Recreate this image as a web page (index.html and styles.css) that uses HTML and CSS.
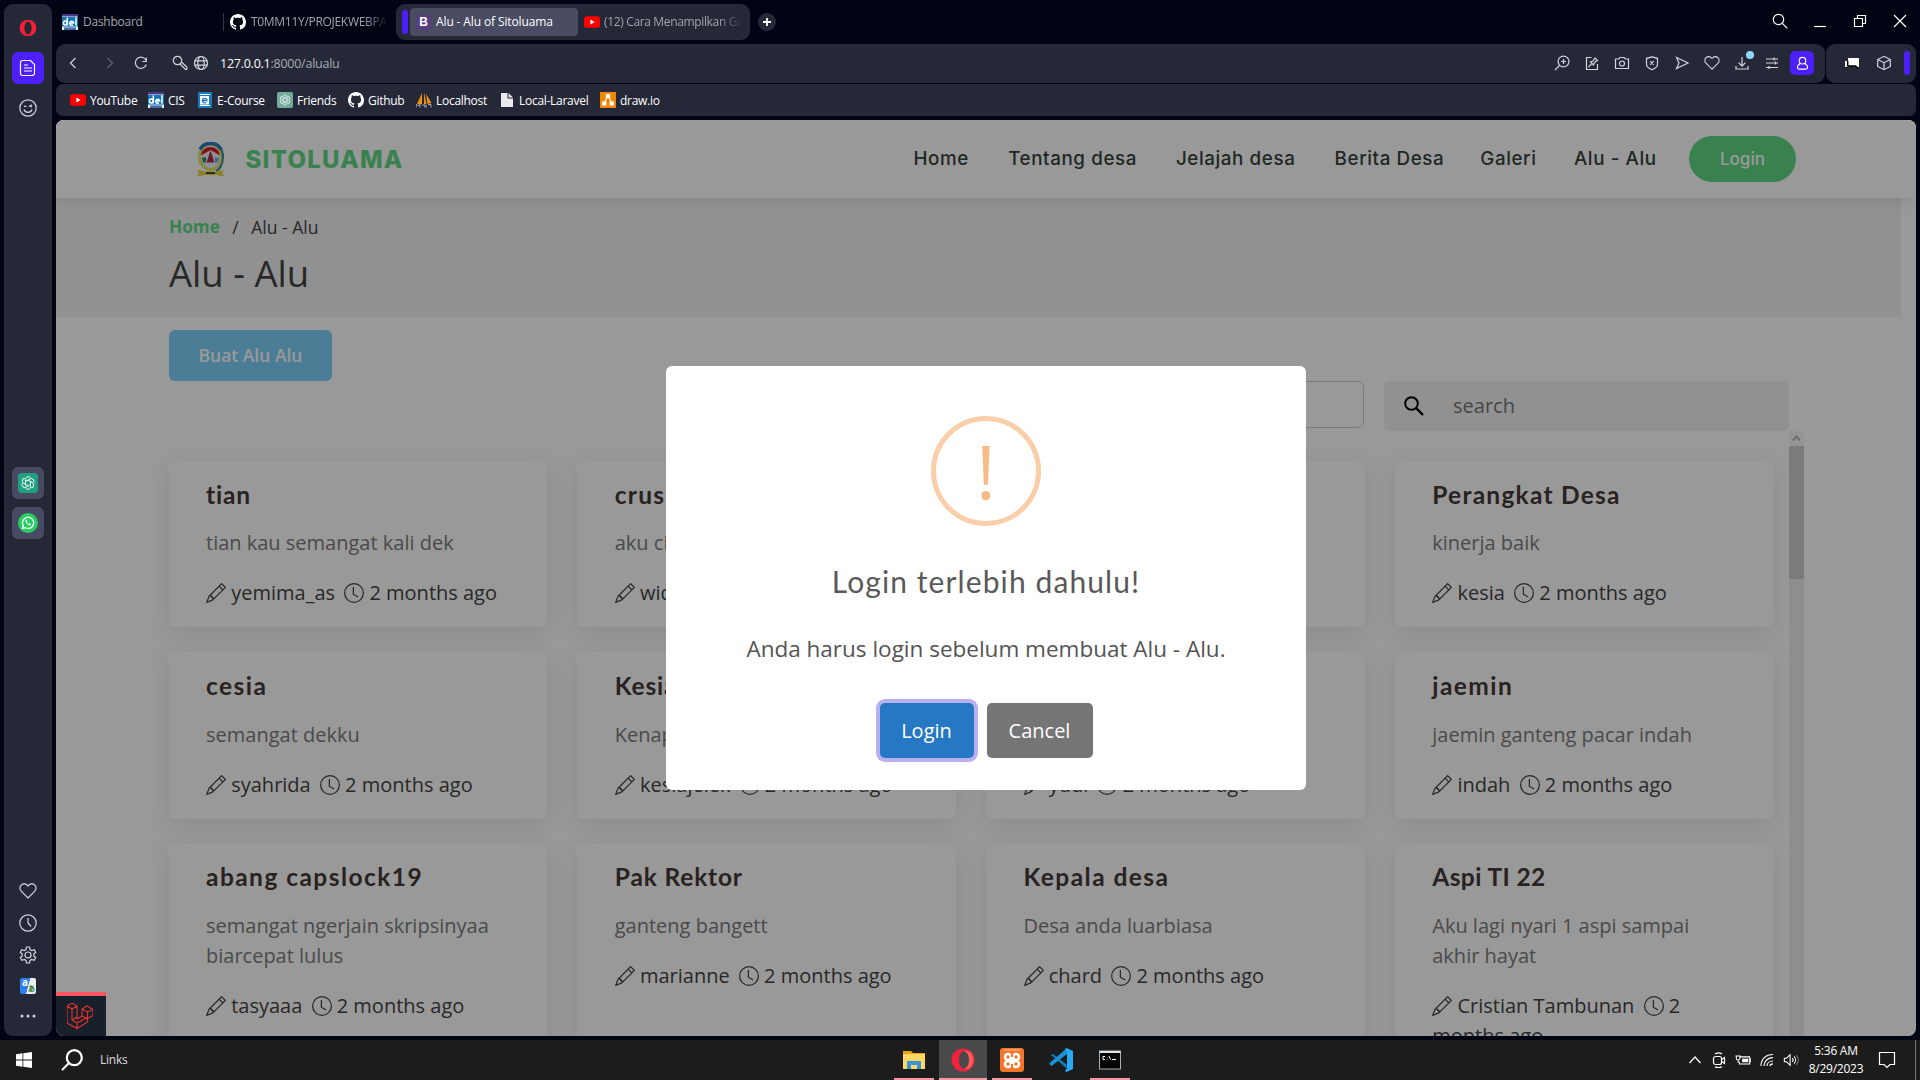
FILE: index.html
```html
<!DOCTYPE html>
<html lang="id">
<head>
<meta charset="utf-8">
<title>Alu - Alu of Sitoluama</title>
<link rel="stylesheet" href="styles.css">
</head>
<body>
<svg class="sprite" aria-hidden="true">
  <symbol id="pencil" viewBox="0 0 16 16"><path d="M12.146.146a.5.5 0 0 1 .708 0l3 3a.5.5 0 0 1 0 .708l-10 10a.5.5 0 0 1-.168.11l-5 2a.5.5 0 0 1-.65-.65l2-5a.5.5 0 0 1 .11-.168l10-10zM11.207 2.5 13.5 4.793 14.793 3.5 12.5 1.207 11.207 2.5zm1.586 3L10.5 3.207 4 9.707V10h.5a.5.5 0 0 1 .5.5v.5h.5a.5.5 0 0 1 .5.5v.5h.293l6.5-6.5zm-9.761 5.175-.106.106-1.528 3.821 3.821-1.528.106-.106A.5.5 0 0 1 5 12.5V12h-.5a.5.5 0 0 1-.5-.5V11h-.5a.5.5 0 0 1-.468-.325z"/></symbol>
  <symbol id="clock" viewBox="0 0 16 16"><path d="M8 3.5a.5.5 0 0 0-1 0V9a.5.5 0 0 0 .252.434l3.5 2a.5.5 0 0 0 .496-.868L8 8.71V3.5z"/><path d="M8 16A8 8 0 1 0 8 0a8 8 0 0 0 0 16zm7-8A7 7 0 1 1 1 8a7 7 0 0 1 14 0z"/></symbol>
  <symbol id="github" viewBox="0 0 16 16"><path d="M8 0C3.58 0 0 3.58 0 8c0 3.54 2.29 6.53 5.47 7.59.4.07.55-.17.55-.38 0-.19-.01-.82-.01-1.49-2.01.37-2.53-.49-2.69-.94-.09-.23-.48-.94-.82-1.13-.28-.15-.68-.52-.01-.53.63-.01 1.08.58 1.23.82.72 1.21 1.87.87 2.33.66.07-.52.28-.87.51-1.07-1.78-.2-3.64-.89-3.64-3.95 0-.87.31-1.59.82-2.15-.08-.2-.36-1.02.08-2.12 0 0 .67-.21 2.2.82.64-.18 1.32-.27 2-.27s1.36.09 2 .27c1.53-1.04 2.2-.82 2.2-.82.44 1.1.16 1.92.08 2.12.51.56.82 1.27.82 2.15 0 3.07-1.87 3.75-3.65 3.95.29.25.54.73.54 1.48 0 1.07-.01 1.93-.01 2.2 0 .21.15.46.55.38A8.01 8.01 0 0 0 16 8c0-4.42-3.58-8-8-8z"/></symbol>
  <symbol id="youtube" viewBox="0 0 16 16"><rect y="2.3" width="16" height="11.4" rx="2.6" fill="#f00"/><path d="M6.4 5.6v4.8L10.6 8z" fill="#fff"/></symbol>
  <symbol id="del" viewBox="0 0 16 16"><rect width="16" height="16" fill="#e8f2f8"/><rect width="16" height="2.5" fill="#4a3a86"/><rect y="3" width="16" height="9.6" fill="#1476b8"/><rect x="2" y="13.4" width="12" height="2.6" fill="#4a6aa8"/><g fill="none" stroke="#fff" stroke-width="1.5"><circle cx="3.3" cy="9" r="1.9"/><path d="M5.3 3.5v8M7.7 9h4a2 2 0 1 0-.8 1.9M14 3.2v8.6"/></g></symbol>
  <symbol id="gpt" viewBox="0 0 16 16"><g fill="none" stroke="#fff" stroke-width=".9"><g id="petal"><path d="M5.500 9.300V4.300a2.800 2.800 0 0 1 5-1.600"/></g><use href="#petal" transform="rotate(60 8 8)"/><use href="#petal" transform="rotate(120 8 8)"/><use href="#petal" transform="rotate(180 8 8)"/><use href="#petal" transform="rotate(240 8 8)"/><use href="#petal" transform="rotate(300 8 8)"/></g></symbol>
  <symbol id="heart" viewBox="0 0 18 16"><path d="M9 15 2.2 8.1a4.2 4.2 0 0 1 0-6 4.2 4.2 0 0 1 6 0L9 3l.8-.9a4.2 4.2 0 0 1 6 0 4.2 4.2 0 0 1 0 6z"/></symbol>
</svg>

<div class="browser">
  <aside class="rail">
    <svg class="rail-opera" viewBox="0 0 16 16"><path fill-rule="evenodd" fill="#fa1e37" d="M8 .6a7.400 7.400 0 1 0 0 14.800A7.400 7.400 0 0 0 8 .6zm0 1.800c1.900 0 3.200 2.400 3.200 5.600S9.900 13.600 8 13.600 4.800 11.200 4.800 8 6.100 2.400 8 2.400z"/></svg>
    <div class="rail-box rail-active"><svg viewBox="0 0 18 18" class="line"><path d="M3.5 1.5h8l4 4v8.500a2.500 2.500 0 0 1-2.500 2.500h-9.500a2 2 0 0 1-2-2v-11a2 2 0 0 1 2-2zM5 6h4M5 9h8M5 12h8"/></svg></div>
    <svg class="rail-icon line rail-smile" viewBox="0 0 18 18"><circle cx="9" cy="9" r="8.200"/><path d="M5 10.500c1.300 3.700 6.700 3.700 8 0M5 7.300h2.500M13 5.700l-2.300 1.400 2.300.9"/></svg>
    <div class="rail-box rail-app rail-first"><svg class="rail-logo rail-gpt" viewBox="-2 -2 20 20"><use href="#gpt" width="16" height="16"/></svg></div>
    <div class="rail-box rail-app"><svg class="rail-logo rail-wa" viewBox="0 0 20 20"><path d="m4.500 15.500.8-2.800a5.600 5.600 0 1 1 2.100 2z" fill="none" stroke="#fff" stroke-width="1.300"/><path d="M7.500 7c-.6 2.600 2.700 6 5.200 5.200l.2-1.200-1.500-.8-.8.7c-.8-.3-1.500-1-1.800-1.800l.6-.8-.7-1.500z" fill="#fff"/></svg></div>
    <div class="rail-bottom">
      <svg class="line" viewBox="0 0 18 16"><use href="#heart"/></svg>
      <svg class="line" viewBox="0 0 18 18"><circle cx="9" cy="9" r="8.200"/><path d="M9 4v5l3 3.500"/></svg>
      <svg class="line" viewBox="0 0 18 18"><path d="M7.500 1h3l.5 2.500 1.700 1 2.500-.8 1.500 2.600L14.800 8v2l1.900 1.700-1.500 2.600-2.500-.8-1.700 1-.5 2.500h-3L7 14.500l-1.700-1-2.500.8-1.500-2.600L3.200 10V8L1.300 6.300l1.500-2.600 2.500.8 1.700-1z"/><circle cx="9" cy="9" r="3"/></svg>
      <div class="translate"><b>a</b><i>あ</i></div>
      <svg viewBox="0 0 18 6" class="dots"><circle cx="3" cy="3" r="1.500"/><circle cx="9" cy="3" r="1.500"/><circle cx="15" cy="3" r="1.500"/></svg>
    </div>
  </aside>

  <div class="main">
    <div class="tabs">
      <div class="tab tab-dash"><svg class="fav"><use href="#del"/></svg><span>Dashboard</span></div>
      <div class="tab tab-git"><svg class="fav white"><use href="#github"/></svg><span class="fade">T0MM11Y/PROJEKWEBPA</span></div>
      <div class="tab-group">
        <div class="tab-bar"></div>
        <div class="tab tab-on"><span class="bs">B</span><span>Alu - Alu of Sitoluama</span></div>
        <div class="tab tab-yt"><svg class="fav"><use href="#youtube"/></svg><span class="fade">(12) Cara Menampilkan Ga</span></div>
      </div>
      <svg class="plus" viewBox="0 0 18 18"><circle cx="9" cy="9" r="9" fill="#252837"/><path d="M9 5v8M5 9h8" stroke="#fff" stroke-width="1.800"/></svg>
      <div class="window-tools">
        <svg class="line" viewBox="0 0 16 16"><circle cx="6.500" cy="6.500" r="5.200"/><path d="m10.300 10.300 5 5"/></svg>
        <svg class="line" viewBox="0 0 16 16"><path d="M2 13.500h12"/></svg>
        <svg class="line" viewBox="0 0 16 16"><path d="M2.500 5.500h8v8h-8zM5.500 5V2.500h8v8H11"/></svg>
        <svg class="line" viewBox="0 0 16 16"><path d="m2 2 12 12M14 2 2 14"/></svg>
      </div>
    </div>

    <div class="toolbar">
      <div class="address">
        <svg class="line back" viewBox="0 0 16 16"><path d="M10.500 3 5.500 8l5 5"/></svg>
        <svg class="line forward" viewBox="0 0 16 16"><path d="m5.500 3 5 5-5 5"/></svg>
        <svg class="line reload" viewBox="0 0 16 16"><path d="M13.300 9.500A5.600 5.600 0 1 1 13 5.300M13.300 2.500v4h-4"/></svg>
        <svg class="line key" viewBox="0 0 16 16"><circle cx="5.500" cy="5.500" r="4.200"/><path d="m8 9 5.500 5.500h1.300V12L9.400 7M4 4h.5"/></svg>
        <svg class="line globe" viewBox="0 0 16 16"><circle cx="8" cy="8" r="6.500"/><ellipse cx="8" cy="8" rx="3.200" ry="6.500"/><path d="M1.500 5.800h13M1.500 10.200h13"/></svg>
        <span class="url"><b>127.0.0.1</b>:8000/alualu</span>
        <div class="actions">
          <svg class="line" viewBox="0 0 16 16"><circle cx="9.500" cy="6.500" r="5.400"/><path d="M5.500 10.500 1 15M9.500 4v5M7 6.500h5"/></svg>
          <svg class="line" viewBox="0 0 16 16"><path d="M7.500 2.500h-5v12h11V9M4.500 12l3-3M6.500 7l3 3 1-2.500 3-2-2.500-2.500-2 3z"/></svg>
          <svg class="line" viewBox="0 0 16 16"><path d="M1.500 4h3L6 2.500h4L11.500 4h3v9.500h-13z"/><circle cx="8" cy="8.500" r="2.500"/></svg>
          <svg class="line" viewBox="0 0 16 16"><path d="m8 1.800 5.500 1.500v6c0 2.700-3 4.500-5.500 5.500-2.500-1-5.500-2.800-5.500-5.500v-6zM6.200 6.200l3.600 3.600M9.800 6.200 6.200 9.800"/></svg>
          <svg class="line" viewBox="0 0 16 16"><path d="m2.500 2.500 11.500 5.500-11.500 5.500L5 8z"/></svg>
          <svg class="line" viewBox="0 0 18 16"><use href="#heart"/></svg>
          <span class="download"><svg class="line" viewBox="0 0 16 16"><path d="M8 2v9M4.500 7.700 8 11.200l3.500-3.500M2 11v3h12v-3"/></svg></span>
          <svg class="line" viewBox="0 0 16 16"><path d="M2 4h12M2 8h12M2 12.500h12M10 2.500v3M11.500 6.500v3M5 11v3"/></svg>
          <span class="profile"><svg class="line" viewBox="0 0 16 16"><circle cx="8" cy="5" r="3.500"/><path d="M5.500 8C3.500 9.300 2.500 10.500 2.500 12c0 1.300.8 2 2 2h7c1.200 0 2-.7 2-2 0-1.500-1-2.700-3-4"/></svg></span>
        </div>
      </div>
      <div class="extras">
        <svg class="chair" viewBox="0 0 16 12"><path d="M4 1h11v8H4zM1 4h2.500v6H1zM12.500 5H15v5h-2.500z" fill="#fff"/><path d="M4.500 9h8M2 10.500h2M12 10.500h2M3.700 4v5" stroke="#000" stroke-width="1.500"/></svg>
        <svg class="line cube" viewBox="0 0 16 16"><path d="m8 1.300 6.300 3.200v7L8 14.700l-6.300-3.200v-7zM1.700 4.500 8 7.700l6.300-3.200M8 7.700v7"/></svg>
        <div class="extras-bar"></div>
      </div>
    </div>

    <div class="bookmarks">
      <a><svg class="fav"><use href="#youtube"/></svg>YouTube</a>
      <a><svg class="fav"><use href="#del"/></svg>CIS</a>
      <a><svg class="fav" viewBox="0 0 16 16"><rect x="1" width="14" height="16" fill="#1b7bbd"/><path d="M3 2.500h10M3 13.500h10" stroke="#fff"/><rect x="3" y="4" width="9" height="8.500" fill="#fff"/><path d="M5 8.500h5a2.300 2.300 0 1 0-1 2" fill="none" stroke="#1b7bbd" stroke-width="1.300"/></svg>E-Course</a>
      <a><svg class="fav gpt-fav" viewBox="-2 -2 20 20"><use href="#gpt" width="16" height="16"/></svg>Friends</a>
      <a><svg class="fav white"><use href="#github"/></svg>Github</a>
      <a><svg class="fav" viewBox="0 0 16 16"><path d="M6 1 1 12h5zM8 0v12h2.500zM10 2l5.500 9-4 1z" fill="#f29111"/><path d="M0 15.500V12l2 2 2-2v3.500M6 13h3v2.500M10 12.500v3M12 12.500h3v3" fill="none" stroke="#a9a9bd"/></svg>Localhost</a>
      <a><svg class="fav" viewBox="0 0 16 16"><path d="M2 1h6.500v5.500H14V15H2z" fill="#e8eaed"/><path d="m9.500 1 4.500 4.500H9.500z" fill="#e8eaed"/></svg>Local-Laravel</a>
      <a><svg class="fav" viewBox="0 0 16 16"><rect width="16" height="16" fill="#f08705"/><path d="m8 4-4 7M8 4l4 7" stroke="#fff" stroke-width="1.200"/><rect x="5.800" y="2" width="4.400" height="4" rx=".5" fill="#fff"/><rect x="2" y="9.500" width="4.400" height="4" rx=".5" fill="#fff"/><rect x="9.600" y="9.500" width="4.400" height="4" rx=".5" fill="#fff"/></svg>draw.io</a>
    </div>

    <div class="page">
      <header class="site-header">
        <svg class="crest" viewBox="0 0 27 34"><ellipse cx="13.500" cy="14.500" rx="12.500" ry="14" fill="#dfe368"/><path d="M13.500.5c8 0 12.500 6 12.500 14s-4 13-7 14" fill="none" stroke="#2a8aa0" stroke-width="2"/><path d="M3 7c4-8 17-8 21 0" fill="none" stroke="#2b7cc0" stroke-width="3.500"/><ellipse cx="13.500" cy="14.500" rx="9.500" ry="11" fill="#eef"/><path d="M4 13C5.500 1.500 21.500 1.500 23 13l-3.500-2-6-3.500-6 3.500z" fill="#e21a22"/><path d="m13.500 8 4 12h-8z" fill="#b03040"/><path d="M5 15h4v5H6z" fill="#2b8c50"/><path d="M18 15h4l-1 5h-3z" fill="#68b0c8"/><path d="M0 28h5l1 1h15l1-1h5l-2 2 2 3.500h-5l-1-1H6l-1 1H0L2 31z" fill="#e4d53c"/><path d="M9 30.500h9" stroke="#554a10" stroke-width="2"/></svg>
        <span class="brand">SITOLUAMA</span>
        <nav class="menu"><a>Home</a><a>Tentang desa</a><a>Jelajah desa</a><a>Berita Desa</a><a>Galeri</a><a>Alu - Alu</a></nav>
        <a class="header-login">Login</a>
      </header>

      <section class="crumbs">
        <div class="trail"><a>Home</a><span>/</span><span>Alu - Alu</span></div>
        <h1>Alu - Alu</h1>
      </section>

      <section class="controls">
        <button class="create">Buat Alu Alu</button>
        <div class="filters">
          <div class="picker"></div>
          <div class="search"><svg viewBox="0 0 20 20"><circle cx="7.500" cy="7.500" r="6.300" fill="none" stroke="#000" stroke-width="2"/><path d="m12 12 7 7" stroke="#000" stroke-width="2.400"/></svg><span>search</span></div>
        </div>
      </section>

      <section class="list">
        <div class="cards">
          <article class="card"><h2>tian</h2><p>tian kau semangat kali dek</p><div class="meta"><svg><use href="#pencil"/></svg> yemima_as <svg class="when"><use href="#clock"/></svg> 2 months ago</div></article>
          <article class="card"><h2 class="wide">crus</h2><p>aku ci</p><div class="meta"><svg><use href="#pencil"/></svg> wid</div></article>
          <article class="card"></article>
          <article class="card"><h2 class="wide">Perangkat Desa</h2><p>kinerja baik</p><div class="meta"><svg><use href="#pencil"/></svg> kesia <svg class="when"><use href="#clock"/></svg> 2 months ago</div></article>
          <article class="card"><h2 class="wider">cesia</h2><p>semangat dekku</p><div class="meta"><svg><use href="#pencil"/></svg> syahrida <svg class="when"><use href="#clock"/></svg> 2 months ago</div></article>
          <article class="card"><h2>Kesia</h2><p>Kenapa</p><div class="meta"><svg><use href="#pencil"/></svg> kesiajelek <svg class="when"><use href="#clock"/></svg> 2 months ago</div></article>
          <article class="card"><h2>&nbsp;</h2><p>&nbsp;</p><div class="meta"><svg><use href="#pencil"/></svg> yudi <svg class="when"><use href="#clock"/></svg> 2 months ago</div></article>
          <article class="card"><h2 class="wider">jaemin</h2><p>jaemin ganteng pacar indah</p><div class="meta"><svg><use href="#pencil"/></svg> indah <svg class="when"><use href="#clock"/></svg> 2 months ago</div></article>
          <article class="card"><h2 class="wider">abang capslock19</h2><p>semangat ngerjain skripsinyaa biarcepat lulus</p><div class="meta"><svg><use href="#pencil"/></svg> tasyaaa <svg class="when"><use href="#clock"/></svg> 2 months ago</div></article>
          <article class="card"><h2>Pak Rektor</h2><p>ganteng bangett</p><div class="meta"><svg><use href="#pencil"/></svg> marianne <svg class="when"><use href="#clock"/></svg> 2 months ago</div></article>
          <article class="card"><h2 class="wider">Kepala desa</h2><p>Desa anda luarbiasa</p><div class="meta"><svg><use href="#pencil"/></svg> chard <svg class="when"><use href="#clock"/></svg> 2 months ago</div></article>
          <article class="card"><h2 class="tight">Aspi TI 22</h2><p>Aku lagi nyari 1 aspi sampai akhir hayat</p><div class="meta"><svg><use href="#pencil"/></svg> Cristian Tambunan <svg class="when"><use href="#clock"/></svg> 2 months ago</div></article>
        </div>
        <div class="scrollbar"><svg viewBox="0 0 15 15"><path d="m4 9.500 3.500-4 3.500 4" fill="none" stroke="#b8b8b8" stroke-width="2.200"/></svg><div class="thumb"></div></div>
      </section>

      <div class="overlay">
        <div class="modal">
          <div class="warn"><span>!</span></div>
          <h3>Login terlebih dahulu!</h3>
          <p>Anda harus login sebelum membuat Alu - Alu.</p>
          <div class="buttons"><button class="ok">Login</button><button class="cancel">Cancel</button></div>
        </div>
      </div>

      <div class="debugbar"><svg viewBox="0 0 26 26"><path d="m0 3 5-3 5 3v13l5-3V6l5-3 6 3.500v6l-5.500 3V19L10 25.500 0 20zM0 3l5 3 5-3M5 6v11l5 3 11-6M15 6l5.500 3L26 6.500M20.500 9v6M10 20v5.500M5 17l5-3M15 13l5.500 3"/></svg></div>
    </div>
  </div>
</div>

<footer class="taskbar">
  <svg class="start" viewBox="0 0 16 16"><path d="M0 2.300 6.500 1.300V7.600H0zM7.300 1.200 16 0v7.600H7.300zM0 8.400h6.500v6.300L0 13.800zM7.300 8.400H16V16l-8.700-1.200z"/></svg>
  <svg class="find" viewBox="0 0 22 22"><circle cx="13.300" cy="8.700" r="7.500"/><path d="M8 14 1 21"/></svg>
  <span class="links">Links</span>
  <div class="apps">
    <div class="app open"><svg viewBox="0 0 24 24"><path d="M1 3h8l2 2h12v16H1z" fill="#e8a50c"/><path d="M1 6h22v15H1z" fill="#ffd864"/><path d="M5 21v-8h14v8h-4v-4H9v4z" fill="#3c92d8"/></svg></div>
    <div class="app open focused"><svg viewBox="0 0 24 24"><path fill-rule="evenodd" d="M12 .5a11.500 11.500 0 1 0 0 23 11.500 11.500 0 0 0 0-23zm1 2.800c2.800 0 5 3.800 5 8.700s-2.200 8.700-5 8.700-5-3.800-5-8.700 2.200-8.700 5-8.700z" fill="#f0233c"/><path d="M13 3.300c5-2 9.500 3 9.500 8.700s-4.500 10.700-9.500 8.700c2.800 0 5-3.800 5-8.700s-2.200-8.700-5-8.700z" fill="#ff5b5b"/></svg></div>
    <div class="app open"><svg viewBox="0 0 24 24"><rect width="24" height="24" rx="3" fill="#f3762b"/><path d="M4 2h16" stroke="#fff" stroke-opacity=".5"/><g fill="none" stroke="#fff" stroke-width="2.600"><circle cx="8" cy="9" r="3"/><circle cx="16" cy="9" r="3"/><circle cx="8" cy="16" r="3"/><circle cx="16" cy="16" r="3"/></g><path d="M9 11h6v3H9z" fill="#fff"/><path d="M11 5h2v4h-2zM11 16h2v4h-2z" fill="#f3762b"/></svg></div>
    <div class="app"><svg viewBox="0 0 24 24"><path d="m2.500 7.200 15 13.300v-4L4 5.900l-3.500 2z" fill="#0d7fc4"/><path d="m.5 16.100 2 1.900L18 6V0L.5 14.900z" fill="#1b8fd8"/><path d="M17.500 0 24 3v18l-6.500 3-1.500-1 2-3V4l-2-3z" fill="#2ba8f2"/></svg></div>
    <div class="app open"><svg viewBox="0 0 24 24"><rect x="1.500" y="3" width="21" height="18" fill="#050505" stroke="#a8b0b6"/><path d="M1.500 4h21" stroke="#dfe4e8" stroke-width="2"/><path d="M7 8.500H5v3h2M9 9v.5M9 11v.5M11 8l1.500 3.500M14 11.500h4" fill="none" stroke="#fff"/></svg></div>
  </div>
  <div class="tray">
    <svg class="line t-up" viewBox="0 0 16 16"><path d="m2.500 11 5.500-6 5.500 6"/></svg>
    <svg class="line" viewBox="0 0 16 16"><rect x="2.500" y="4.500" width="8" height="8" rx="2"/><path d="m10.500 7.500 3-2v6l-3-2M4 2c2-1.300 5-1.300 7 0M4 14.800c2 1 5 1 7 0"/></svg>
    <svg class="line" viewBox="0 0 18 16"><path d="M6 4.500h10.500v8H5V10M16.500 7H18v3h-1.500M1.500 3v3a2 2 0 0 0 4 0V3M0.500 3.500h6M3.500 8v3"/><path d="M8 6.500h7v4H8z" class="charge"/></svg>
    <svg class="line" viewBox="0 0 16 16"><path d="M2 14C2 7 7 2.500 14 2.500M5 14c0-5 4-8.300 9-8.300M8 14c0-3 2.500-5 6-5M11 14c0-1.300 1-2.200 3-2.200"/></svg>
    <svg class="line" viewBox="0 0 18 16"><path d="M1.500 6H4l4-4v12l-4-4H1.500zM10.500 6a3 3 0 0 1 0 4M12.500 4a6 6 0 0 1 0 8"/><path d="M15 2.500a8 8 0 0 1 0 11" opacity=".4"/></svg>
    <div class="time"><span>5:36 AM</span><span>8/29/2023</span></div>
    <svg class="line t-note" viewBox="0 0 18 18"><path d="M1.500 1.500h15v12h-4.500l-3 3-3-3H1.500z"/></svg>
  </div>
</footer>
</body>
</html>
```
FILE: styles.css
```css
* { box-sizing: border-box; }
body {
  margin: 0;
  width: 1920px;
  height: 1080px;
  overflow: hidden;
  background: #010413;
  font-family: "Open Sans", sans-serif;
  display: flex;
  flex-direction: column;
}
h1, h2, h3, p { margin: 0; font-weight: 400; }
svg { display: block; flex: none; }
button { border: 0; padding: 0; font: inherit; }
.sprite { position: absolute; width: 0; height: 0; }
.line { fill: none; stroke: #d4d6de; stroke-width: 1.2; }
.white { fill: #fff; }
.fav { width: 16px; height: 16px; }

.browser { height: 1040px; padding: 4px; display: flex; gap: 4px; flex: none; }

/* Side rail */
.rail {
  width: 48px;
  height: 1032px;
  border-radius: 9px;
  background: #252837;
  display: flex;
  flex-direction: column;
  align-items: center;
}
.rail-opera { width: 18px; height: 18px; margin: 15px 0; }
.rail-box { width: 32px; height: 32px; border-radius: 6px; display: flex; align-items: center; justify-content: center; }
.rail-active { background: #4d1ffc; }
.rail-active svg { width: 18px; height: 18px; stroke: #fff; }
.rail-smile { width: 18px; height: 18px; margin-top: 15px; }
.rail-app { background: #474a61; margin-top: 8px; }
.rail-first { margin-top: 350px; }
.rail-logo { width: 20px; height: 20px; }
.rail-gpt { background: #1fa07e; border-radius: 4px; }
.rail-wa { background: #27cf62; border-radius: 50%; }
.rail-bottom { margin-top: auto; padding-bottom: 11px; display: flex; flex-direction: column; align-items: center; gap: 14px; }
.rail-bottom svg { width: 18px; height: 18px; margin-right: 1px; }
.rail-bottom .dots { fill: #d4d6de; height: 18px; margin-top: -1px; }
.translate {
  width: 16px; height: 16px; border-radius: 2px;
  background: linear-gradient(105deg, #2f80ed 50%, #e9eef0 52%);
  display: flex; line-height: 1;
}
.translate b { font-size: 10px; line-height: 9px; color: #fff; padding-left: 2px; }
.translate i { font: 700 7px/9px "Noto Sans CJK JP", sans-serif; color: #277a2c; padding-top: 6px; }

/* Tab strip */
.main { width: 1860px; }
.tabs { height: 40px; display: flex; align-items: flex-start; font-size: 12px; color: #a3a5ab; }
.tab { display: flex; align-items: center; gap: 5px; height: 36px; white-space: nowrap; letter-spacing: -.25px; }
.tab span { position: relative; top: -1px; }
.tab-dash { width: 168px; padding-left: 6px; height: 36px; }
.tab-git { width: 172px; padding-left: 6px; letter-spacing: -.3px; position: relative; }
.tab-git::before { content: ""; width: 1px; height: 18px; background: #33364a; position: absolute; left: -1px; }
.fade { width: 138px; overflow: hidden; -webkit-mask-image: linear-gradient(90deg, #000 82%, transparent); mask-image: linear-gradient(90deg, #000 82%, transparent); }
.tab-group { width: 354px; height: 36px; border-radius: 9px; background: #252837; display: flex; align-items: center; padding-left: 6px; }
.tab-bar { width: 6px; height: 24px; border-radius: 3px; background: #4d1ffc; margin-right: 2px; }
.tab-on { width: 168px; height: 28px; padding-left: 6px; border-radius: 4px; background: #494c63; color: #fff; letter-spacing: -.12px; }
.tab .bs { top: 0; width: 15px; height: 15px; border-radius: 3px; background: #563d7c; color: #fff; font: 700 12px/15px "Liberation Sans", sans-serif; text-align: center; }
.tab-yt { padding-left: 6px; gap: 4px; letter-spacing: -.35px; }
.plus { width: 18px; height: 18px; margin: 9px 0 0 8px; }
.window-tools { display: flex; gap: 24px; margin: 9px 8px 0 auto; }
.window-tools svg { width: 16px; height: 16px; stroke: #fff; }

/* Address bar */
.toolbar { height: 39px; display: flex; gap: 1px; }
.address { width: 1769px; border-radius: 9px; background: #252837; display: flex; align-items: center; padding: 0 0 1px 9px; }
.address > svg { width: 16px; height: 16px; }
.forward { margin-left: 21px; opacity: .35; }
.reload { margin-left: 15px; }
.key { margin-left: 23px; }
.globe { margin-left: 5px; }
.url { font-size: 12.5px; color: #a9acb8; margin-left: 11px; letter-spacing: -.25px; }
.url b { font-weight: 400; color: #fff; }
.actions { margin: 0 11px 0 auto; display: flex; align-items: center; gap: 14px; }
.actions svg { width: 16px; height: 16px; }
.download { position: relative; }
.download::after { content: ""; position: absolute; right: -4px; top: -4px; width: 8px; height: 8px; border-radius: 50%; background: #8fd7ff; }
.profile { width: 24px; height: 24px; margin-left: -4px; border-radius: 5px; background: #4d1ffc; display: flex; align-items: center; justify-content: center; }
.actions .profile svg { stroke: #fff; width: 15px; height: 15px; }
.extras { width: 90px; border-radius: 9px; background: #252837; display: flex; align-items: center; padding: 0 0 1px 18px; }
.chair { width: 16px; height: 12px; }
.cube { width: 16px; height: 16px; margin-left: 16px; }
.extras-bar { width: 6px; height: 24px; border-radius: 3px; background: #4d1ffc; margin-left: 12px; }

.bookmarks {
  height: 32px; margin-top: 1px; border-radius: 7px; background: #252837; padding-left: 14px;
  display: grid; grid-template-columns: 78px 49px 80px 71px 68px 83px 101px 80px; align-items: center;
  font-size: 12px; color: #fff; letter-spacing: -.28px;
}
.bookmarks a { display: flex; gap: 4px; align-items: center; white-space: nowrap; }
.gpt-fav { background: #74aa9c; border-radius: 2px; }

/* Web page */
.page {
  position: relative;
  width: 1860px; height: 916px; margin-top: 4px;
  border-radius: 8px; overflow: hidden; background: #fff;
}
.site-header {
  position: relative; z-index: 1;
  height: 78px; padding-left: 141px; background: #fff; box-shadow: 0 2px 15px rgba(0, 0, 0, .1);
  display: flex; align-items: center; color: #444;
}
.crest { width: 27px; height: 35px; }
.brand { width: 668px; margin-left: 21.5px; font: 800 24px Inter, sans-serif; letter-spacing: 1.25px; color: #60d985; }
.menu {
  display: grid; grid-template-columns: 56px 129px 120px 107px 55px 80px; gap: 38.7px; padding-bottom: 1px;
  font: 500 18.8px Inter, sans-serif; letter-spacing: .6px; color: #37423b; white-space: nowrap;
}
.header-login {
  width: 107px; height: 46px; margin-left: 35px; border-radius: 23px; background: #60d985; color: #fff;
  font: 500 17px/46px Inter, sans-serif; text-align: center; 
}
.crumbs { width: 1845px; height: 119px; background: #f2f2f2; padding: 16px 0 0 113px; color: #444; }
.trail { height: 26px; display: flex; gap: 12.5px; font-size: 17.5px; line-height: 26px; }
.trail a { font-weight: 700; font-size: 17.2px; color: #60d985; }
.crumbs h1 { font-size: 36.5px; line-height: 42px; margin-top: 12px; }
.controls { height: 114px; padding: 13px 0 0 113px; }
.create { display: block; width: 163px; height: 51px; padding-bottom: 2px; border-radius: 6px; background: #7dd0fb; color: #fff; font-weight: 600; font-size: 17.5px; }
.filters { width: 1620px; display: flex; justify-content: flex-end; gap: 20px; }
.picker { width: 380px; height: 47px; border: 1px solid #ccc; border-radius: 6px; }
.search { width: 405px; height: 50px; border-radius: 5px; background: #f2f2f2; display: flex; align-items: center; padding-left: 20px; gap: 29px; font-size: 20px; color: #757575; }
.search svg { width: 20px; height: 20px; }
.search span { padding-bottom: 2px; }

.list { height: 605px; padding-left: 97.5px; display: flex; overflow: hidden; }
.cards { width: 1635.5px; padding: 30px 15px 0; display: grid; grid-template-columns: repeat(4, 378.75px); grid-template-rows: 166.25px 166.25px 236px; gap: 25px 30px; }
.card { padding: 18.9px 37.5px 0; border-radius: 5px; background: #fff; box-shadow: 0 5px 25px rgba(0, 0, 0, .1); }
.card h2 { font: 700 24.5px/30px Lato, sans-serif; color: #443a38; letter-spacing: .85px; height: 30px; white-space: nowrap; }
.card .wide { letter-spacing: 1.25px; }
.card .wider { letter-spacing: 1.45px; }
.card .tight { letter-spacing: .4px; }
.card p { margin-top: 18.5px; font-size: 20px; line-height: 30px; color: #7c7c7c; }
.meta { margin-top: 20px; font-size: 20px; line-height: 30px; color: #444; }
.meta svg { display: inline-block; width: 20px; height: 20px; vertical-align: -3px; fill: #444; }
.meta .when { margin-left: 4px; }
.scrollbar { width: 15px; background: #ededed; }
.scrollbar svg { width: 15px; height: 15px; background: #f7f7f7; }
.thumb { height: 133px; background: #cdcdcd; }

/* Dialog */
.overlay { position: absolute; inset: 0; z-index: 2; background: rgba(0, 0, 0, .4); display: flex; align-items: center; justify-content: center; }
.modal { width: 640px; height: 424px; border-radius: 6px; background: #fff; display: flex; flex-direction: column; align-items: center; padding-top: 50px; }
.warn { width: 110px; height: 110px; border: 5px solid #facea8; border-radius: 50%; display: flex; align-items: center; justify-content: center; font-size: 75px; line-height: 100px; color: #f8bb86; }
.modal h3 { font: 400 30px/36px Lato, sans-serif; letter-spacing: 1.1px; color: #595959; margin-top: 37px; }
.modal p { font-size: 22.5px; line-height: 34px; color: #545454; margin-top: 33px; }
.buttons { display: flex; gap: 13px; margin-top: 37px; font-size: 20px; }
.buttons button { height: 55px; border-radius: 5px; color: #fff; }
.buttons .ok { width: 94px; background: #2778c4; box-shadow: 0 0 0 4px #b9b0ef; }
.buttons .cancel { width: 106px; background: #757575; }

.debugbar { position: absolute; z-index: 3; left: 0; bottom: 0; width: 50px; height: 44px; border-top: 4px solid #fb5661; background: #18202c; padding: 7px 0 0 11px; }
.debugbar svg { width: 26px; height: 26px; fill: none; stroke: #e8322c; stroke-width: 1.1; }

/* Taskbar */
.taskbar { height: 40px; background: #1c1c1c; color: #fff; display: flex; align-items: center; font-size: 12px; letter-spacing: -.25px; }
.start { width: 16px; height: 16px; margin-left: 16px; fill: #fff; }
.find { width: 22px; height: 22px; margin-left: 29px; fill: none; stroke: #fff; stroke-width: 2.2; }
.links { width: 790px; margin-left: 17px; padding-bottom: 1px; color: #ddd; }
.apps { display: flex; gap: 1px; }
.app { width: 48px; height: 40px; padding-top: 8px; display: flex; flex-direction: column; align-items: center; gap: 6px; }
.app svg { width: 24px; height: 24px; }
.open::after { content: ""; width: 40px; height: 2px; background: #fa98a5; }
.focused { background: #494949; }
.focused::after { width: 48px; }
.tray { margin-left: auto; padding-right: 4px; height: 40px; display: flex; align-items: center; }
.tray .line { width: 16px; height: 16px; margin-right: 8px; stroke: #fff; }
.tray .charge { fill: #fff; stroke: none; }
.time { width: 64px; margin: 0 10px 0 -3px; display: flex; flex-direction: column; align-items: center; line-height: 18px; }
.tray .t-note { width: 18px; height: 18px; margin-right: 19px; }
.tray::after { content: ""; width: 1px; height: 40px; background: #777; }
```
